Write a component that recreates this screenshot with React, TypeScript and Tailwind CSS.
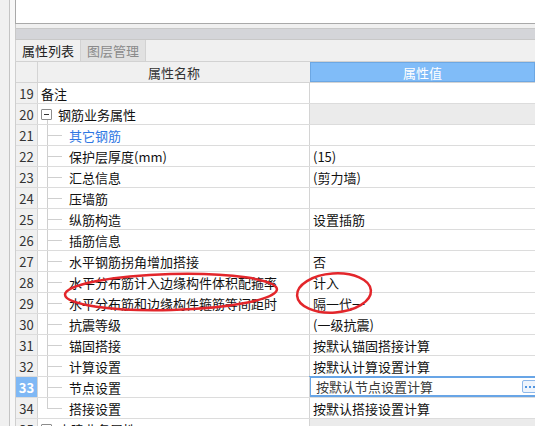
import React from 'react';

type Row = {
  n: number;
  name: string;
  value?: string;
  kind: 'plain' | 'group' | 'child' | 'last';
  blue?: boolean;
  editing?: boolean;
};

const rows: Row[] = [
  { n: 19, name: '备注', kind: 'plain' },
  { n: 20, name: '钢筋业务属性', kind: 'group' },
  { n: 21, name: '其它钢筋', kind: 'child', blue: true },
  { n: 22, name: '保护层厚度(mm)', value: '(15)', kind: 'child' },
  { n: 23, name: '汇总信息', value: '(剪力墙)', kind: 'child' },
  { n: 24, name: '压墙筋', kind: 'child' },
  { n: 25, name: '纵筋构造', value: '设置插筋', kind: 'child' },
  { n: 26, name: '插筋信息', kind: 'child' },
  { n: 27, name: '水平钢筋拐角增加搭接', value: '否', kind: 'child' },
  { n: 28, name: '水平分布筋计入边缘构件体积配箍率', value: '计入', kind: 'child' },
  { n: 29, name: '水平分布筋和边缘构件箍筋等间距时', value: '隔一代一', kind: 'child' },
  { n: 30, name: '抗震等级', value: '(一级抗震)', kind: 'child' },
  { n: 31, name: '锚固搭接', value: '按默认锚固搭接计算', kind: 'child' },
  { n: 32, name: '计算设置', value: '按默认计算设置计算', kind: 'child' },
  { n: 33, name: '节点设置', value: '按默认节点设置计算', kind: 'child', editing: true },
  { n: 34, name: '搭接设置', value: '按默认搭接设置计算', kind: 'last' },
  { n: 35, name: '土建业务属性', kind: 'group' },
];

function Expander() {
  return (
    <span className="relative z-10 flex h-[11px] w-[11px] items-center justify-center rounded-[1px] border border-[#8c8c8c] bg-white">
      <span className="h-px w-[5px] bg-[#333]" />
    </span>
  );
}

function NameCell({ row }: { row: Row }) {
  const tree = row.kind === 'child' || row.kind === 'last';
  return (
    <div className="relative flex items-center border-r border-[#d4d4d4] pl-[3px]">
      {row.n === 20 && (
        <span className="absolute left-[9px] top-1/2 bottom-0 w-px bg-[#cfcfcf]" />
      )}
      {tree && (
        <>
          <span
            className={
              row.kind === 'last'
                ? 'absolute left-[9px] top-0 h-1/2 w-px bg-[#cfcfcf]'
                : 'absolute left-[9px] top-0 bottom-0 w-px bg-[#cfcfcf]'
            }
          />
          <span className="absolute left-[9px] top-1/2 h-px w-[15px] bg-[#cfcfcf]" />
        </>
      )}
      {row.kind === 'group' && (
        <span className="mr-[6px]">
          <Expander />
        </span>
      )}
      <span
        className={
          (tree ? 'pl-[28px] ' : '') +
          (row.blue ? 'text-[#2f78e3]' : 'text-[#111]') +
          ' whitespace-nowrap'
        }
      >
        {row.name}
      </span>
    </div>
  );
}

function ValueCell({ row }: { row: Row }) {
  if (row.editing) {
    return (
      <div className="flex items-center overflow-hidden border-2 border-[#68a5e6] pl-[5px] -ml-px -mt-px -mr-[4px]">
        <span className="flex-1 whitespace-nowrap text-[#3a3a3a]">{row.value}</span>
        <span className="mr-[-3px] flex h-[13px] w-[18px] shrink-0 items-center gap-[2px] rounded-[2px] border border-[#8db8ea] bg-[#eef4fc] pl-[2px]">
          <span className="h-[2px] w-[2px] shrink-0 bg-[#4f94e0]" />
          <span className="h-[2px] w-[2px] shrink-0 bg-[#4f94e0]" />
          <span className="h-[2px] w-[2px] shrink-0 bg-[#4f94e0]" />
        </span>
      </div>
    );
  }
  return (
    <div
      className={
        'flex items-center whitespace-nowrap pl-[3px] text-[#111] ' +
        (row.kind === 'group' ? 'bg-[#ebebeb]' : 'bg-white')
      }
    >
      {row.value}
    </div>
  );
}

export default function App() {
  return (
    <div className="relative flex h-[426px] w-[535px] overflow-hidden bg-[#f0f0f0] font-['Microsoft_YaHei','Noto_Sans_CJK_SC',sans-serif] text-[13px] leading-none">
      {/* left margin */}
      <div className="flex w-[15px] shrink-0">
        <div className="w-[10px] border-r border-[#c4c4c4] bg-[#f0f0f0]" />
        <div className="flex-1 bg-[#f7f7f7]" />
      </div>

      {/* main */}
      <div className="flex min-w-0 flex-1 flex-col">
        <div className="h-[24px] shrink-0 border-b border-l border-[#a9a9a9] bg-white" />
        <div className="h-[4px] shrink-0 border-l border-[#c8c8c8] bg-[#f0f0f0]" />
        <div className="h-[12px] shrink-0 border-l border-y border-[#c8c8c8] bg-[#d4d5d9]" />

        {/* tabs */}
        <div className="flex h-[22px] shrink-0 border-b border-l border-[#d2d2d2] bg-[#f0f0f0]">
          <div className="flex w-[65px] items-center justify-center border-r border-[#d2d2d2] bg-[#f0f0f0] text-[#222]">
            属性列表
          </div>
          <div className="flex w-[65px] items-center justify-center border-r border-[#d2d2d2] bg-[#e1e1e1] text-[#8a8a8a]">
            图层管理
          </div>
        </div>

        {/* grid */}
        <div className="flex flex-1 flex-col border-l border-[#cfcfcf] bg-white">
          <div className="grid h-[21px] shrink-0 grid-cols-[22px_272px_1fr] border-b border-[#d4d4d4] bg-[#f0f0f0]">
            <div className="border-r border-[#d4d4d4]" />
            <div className="flex items-center justify-center text-[#333]">属性名称</div>
            <div className="flex items-center justify-center border border-[#6ca7e3] bg-[#80bcf8] text-white">
              属性值
            </div>
          </div>
          {rows.map((row) => (
            <div
              key={row.n}
              className="grid h-[21px] shrink-0 grid-cols-[22px_272px_1fr] border-b border-[#dcdcdc]"
            >
              <div
                className={
                  row.editing
                    ? 'flex items-center justify-center border-r border-[#d4d4d4] bg-[#7fb8f5] font-bold text-white'
                    : 'flex items-center justify-center border-r border-[#d4d4d4] bg-[#f0f0f0] text-[#333]'
                }
              >
                {row.n}
              </div>
              <NameCell row={row} />
              <ValueCell row={row} />
            </div>
          ))}
        </div>
      </div>

      {/* red annotation rings */}
      <svg
        className="pointer-events-none absolute left-0 top-0"
        width="535"
        height="426"
        viewBox="0 0 535 426"
      >
        <ellipse
          cx="171"
          cy="292"
          rx="106"
          ry="18"
          transform="rotate(-1.5 171 292)"
          fill="none"
          stroke="#e3262b"
          strokeWidth="2.5"
        />
        <ellipse
          cx="334"
          cy="293"
          rx="37"
          ry="19.5"
          transform="rotate(-4 334 293)"
          fill="none"
          stroke="#e3262b"
          strokeWidth="2.5"
        />
      </svg>
    </div>
  );
}
